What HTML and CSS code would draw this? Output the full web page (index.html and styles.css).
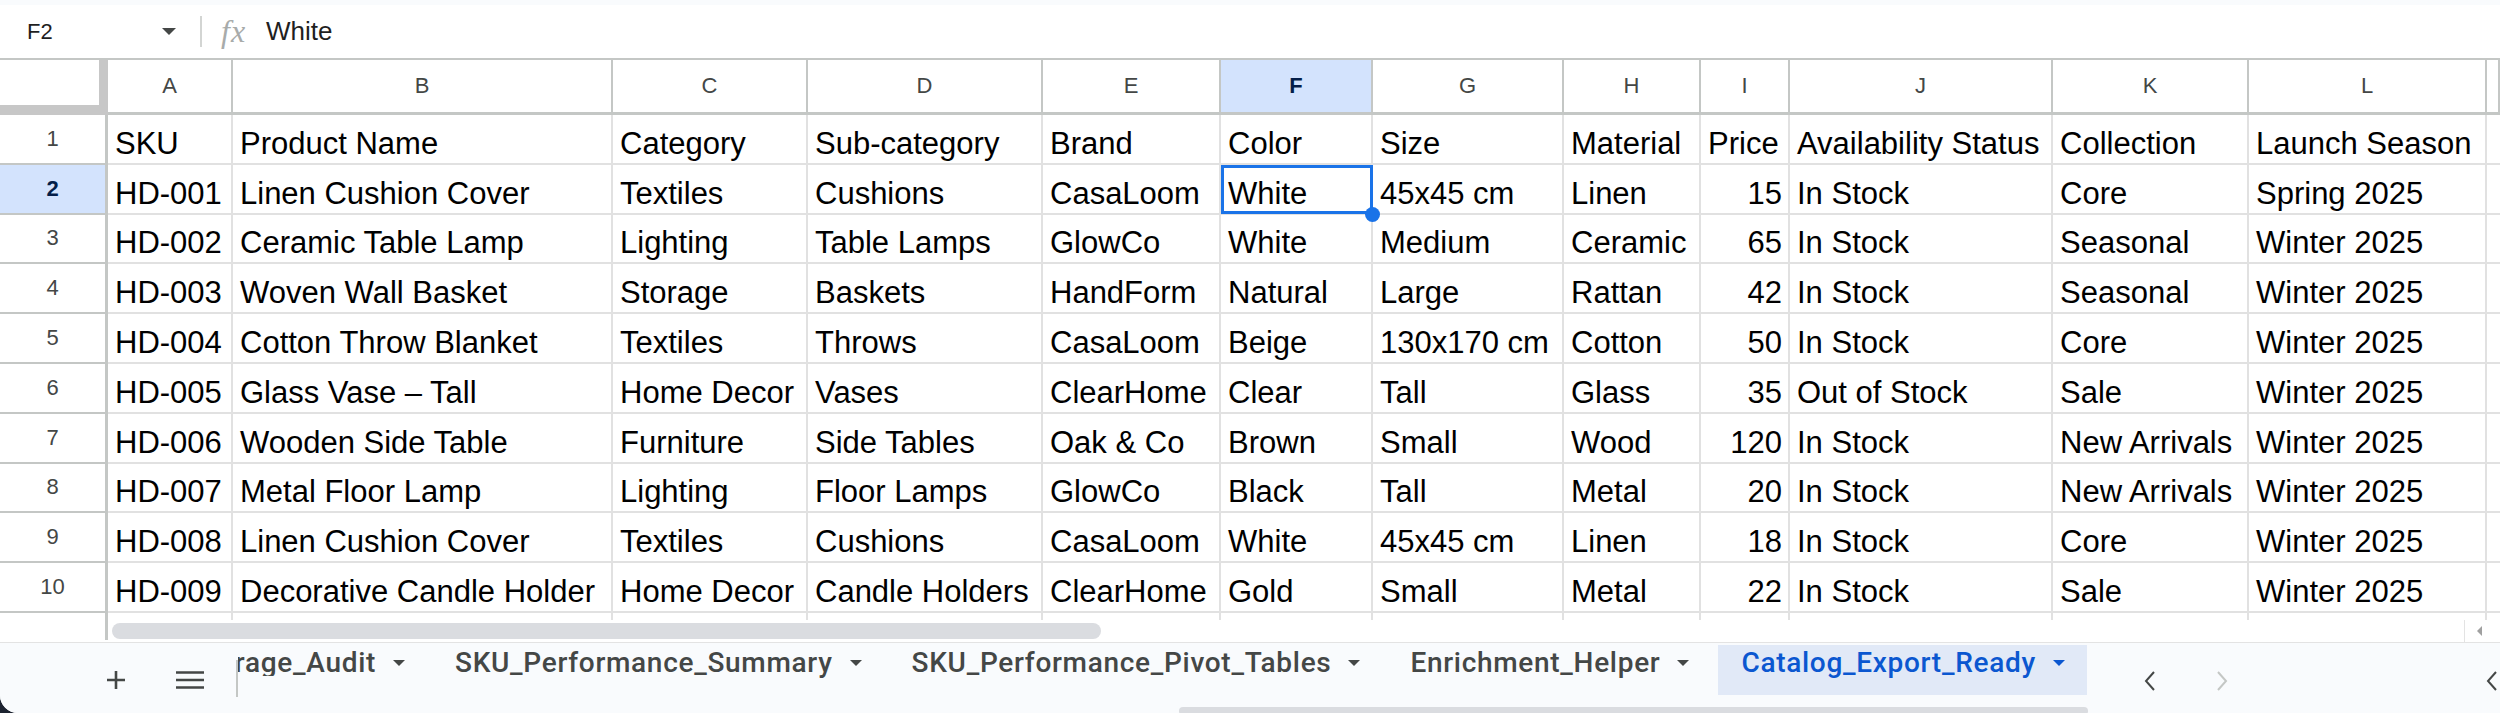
FILE: index.html
```html
<!DOCTYPE html>
<html lang="en">
<head>
	<meta charset="UTF-8">
	<title>Catalog_Export_Ready</title>
	<link rel="stylesheet" href="styles.css">
</head>
<body>
<div class="app">
	<div class="formula-bar">
		<div class="name-box"><span class="cell-ref">F2</span><span class="caret"></span></div>
		<div class="fb-divider"></div>
		<span class="fx">fx</span>
		<span class="formula">White</span>
	</div>

	<div class="sheet">
		<div class="row head">
			<div class="corner"></div>
			<div class="col">A</div><div class="col">B</div><div class="col">C</div><div class="col">D</div>
			<div class="col">E</div><div class="col sel">F</div><div class="col">G</div><div class="col">H</div>
			<div class="col">I</div><div class="col">J</div><div class="col">K</div><div class="col">L</div>
			<div class="col"></div>
		</div>
		<div class="row">
			<div class="rh">1</div>
			<div class="cell">SKU</div><div class="cell">Product Name</div><div class="cell">Category</div><div class="cell">Sub-category</div>
			<div class="cell">Brand</div><div class="cell">Color</div><div class="cell">Size</div><div class="cell">Material</div>
			<div class="cell">Price</div><div class="cell">Availability Status</div><div class="cell">Collection</div><div class="cell">Launch Season</div>
			<div class="cell"></div>
		</div>
		<div class="row">
			<div class="rh sel">2</div>
			<div class="cell">HD-001</div><div class="cell">Linen Cushion Cover</div><div class="cell">Textiles</div><div class="cell">Cushions</div>
			<div class="cell">CasaLoom</div><div class="cell current">White</div><div class="cell">45x45 cm</div><div class="cell">Linen</div>
			<div class="cell num">15</div><div class="cell">In Stock</div><div class="cell">Core</div><div class="cell">Spring 2025</div>
			<div class="cell"></div>
		</div>
		<div class="row">
			<div class="rh">3</div>
			<div class="cell">HD-002</div><div class="cell">Ceramic Table Lamp</div><div class="cell">Lighting</div><div class="cell">Table Lamps</div>
			<div class="cell">GlowCo</div><div class="cell">White</div><div class="cell">Medium</div><div class="cell">Ceramic</div>
			<div class="cell num">65</div><div class="cell">In Stock</div><div class="cell">Seasonal</div><div class="cell">Winter 2025</div>
			<div class="cell"></div>
		</div>
		<div class="row">
			<div class="rh">4</div>
			<div class="cell">HD-003</div><div class="cell">Woven Wall Basket</div><div class="cell">Storage</div><div class="cell">Baskets</div>
			<div class="cell">HandForm</div><div class="cell">Natural</div><div class="cell">Large</div><div class="cell">Rattan</div>
			<div class="cell num">42</div><div class="cell">In Stock</div><div class="cell">Seasonal</div><div class="cell">Winter 2025</div>
			<div class="cell"></div>
		</div>
		<div class="row">
			<div class="rh">5</div>
			<div class="cell">HD-004</div><div class="cell">Cotton Throw Blanket</div><div class="cell">Textiles</div><div class="cell">Throws</div>
			<div class="cell">CasaLoom</div><div class="cell">Beige</div><div class="cell">130x170 cm</div><div class="cell">Cotton</div>
			<div class="cell num">50</div><div class="cell">In Stock</div><div class="cell">Core</div><div class="cell">Winter 2025</div>
			<div class="cell"></div>
		</div>
		<div class="row">
			<div class="rh">6</div>
			<div class="cell">HD-005</div><div class="cell">Glass Vase – Tall</div><div class="cell">Home Decor</div><div class="cell">Vases</div>
			<div class="cell">ClearHome</div><div class="cell">Clear</div><div class="cell">Tall</div><div class="cell">Glass</div>
			<div class="cell num">35</div><div class="cell">Out of Stock</div><div class="cell">Sale</div><div class="cell">Winter 2025</div>
			<div class="cell"></div>
		</div>
		<div class="row">
			<div class="rh">7</div>
			<div class="cell">HD-006</div><div class="cell">Wooden Side Table</div><div class="cell">Furniture</div><div class="cell">Side Tables</div>
			<div class="cell">Oak &amp; Co</div><div class="cell">Brown</div><div class="cell">Small</div><div class="cell">Wood</div>
			<div class="cell num">120</div><div class="cell">In Stock</div><div class="cell">New Arrivals</div><div class="cell">Winter 2025</div>
			<div class="cell"></div>
		</div>
		<div class="row">
			<div class="rh">8</div>
			<div class="cell">HD-007</div><div class="cell">Metal Floor Lamp</div><div class="cell">Lighting</div><div class="cell">Floor Lamps</div>
			<div class="cell">GlowCo</div><div class="cell">Black</div><div class="cell">Tall</div><div class="cell">Metal</div>
			<div class="cell num">20</div><div class="cell">In Stock</div><div class="cell">New Arrivals</div><div class="cell">Winter 2025</div>
			<div class="cell"></div>
		</div>
		<div class="row">
			<div class="rh">9</div>
			<div class="cell">HD-008</div><div class="cell">Linen Cushion Cover</div><div class="cell">Textiles</div><div class="cell">Cushions</div>
			<div class="cell">CasaLoom</div><div class="cell">White</div><div class="cell">45x45 cm</div><div class="cell">Linen</div>
			<div class="cell num">18</div><div class="cell">In Stock</div><div class="cell">Core</div><div class="cell">Winter 2025</div>
			<div class="cell"></div>
		</div>
		<div class="row">
			<div class="rh">10</div>
			<div class="cell">HD-009</div><div class="cell">Decorative Candle Holder</div><div class="cell">Home Decor</div><div class="cell">Candle Holders</div>
			<div class="cell">ClearHome</div><div class="cell">Gold</div><div class="cell">Small</div><div class="cell">Metal</div>
			<div class="cell num">22</div><div class="cell">In Stock</div><div class="cell">Sale</div><div class="cell">Winter 2025</div>
			<div class="cell"></div>
		</div>
		<div class="row stub">
			<div class="rh"></div>
			<div class="cell"></div><div class="cell"></div><div class="cell"></div><div class="cell"></div>
			<div class="cell"></div><div class="cell"></div><div class="cell"></div><div class="cell"></div>
			<div class="cell"></div><div class="cell"></div><div class="cell"></div><div class="cell"></div>
			<div class="cell"></div>
		</div>
	</div>

	<div class="hscroll">
		<div class="hscroll-gutter"></div>
		<div class="hscroll-track"><div class="hscroll-thumb"></div></div>
		<div class="hscroll-end"><span class="mini-tri"></span></div>
	</div>

	<div class="tabbar">
		<div class="tb-btn add">
			<svg width="20" height="20" viewBox="0 0 20 20"><path d="M10 1v18M1 10h18" stroke="#444746" stroke-width="2.6"/></svg>
		</div>
		<div class="tb-btn menu">
			<svg width="28" height="18" viewBox="0 0 28 18"><path d="M0 1.5h28M0 9h28M0 16.5h28" stroke="#444746" stroke-width="2.6"/></svg>
		</div>
		<div class="tb-divider"></div>
		<div class="tabs">
			<div class="tab first"><span class="tab-name"><span>Attribute_Coverage_Audit</span></span><i class="tri"></i></div>
			<div class="tab"><span class="tab-name">SKU_Performance_Summary</span><i class="tri"></i></div>
			<div class="tab"><span class="tab-name">SKU_Performance_Pivot_Tables</span><i class="tri"></i></div>
			<div class="tab"><span class="tab-name">Enrichment_Helper</span><i class="tri"></i></div>
			<div class="tab active"><span class="tab-name">Catalog_Export_Ready</span><i class="tri"></i></div>
		</div>
		<div class="nav prev">
			<svg width="12" height="20" viewBox="0 0 12 20"><path d="M10 1 2 10l8 9" fill="none" stroke="#444746" stroke-width="2"/></svg>
		</div>
		<div class="nav next">
			<svg width="12" height="20" viewBox="0 0 12 20"><path d="M2 1l8 9-8 9" fill="none" stroke="#c4c7c5" stroke-width="2"/></svg>
		</div>
		<div class="side-toggle">
			<svg width="12" height="20" viewBox="0 0 12 20"><path d="M10 1 2 10l8 9" fill="none" stroke="#444746" stroke-width="2"/></svg>
		</div>
		<div class="tab-scroll-thumb"></div>
	</div>
</div>
</body>
</html>
```

FILE: styles.css
```css
* {
	box-sizing: border-box;
}
html, body {
	margin: 0;
}
body {
	background: #1d2330;
	width: 2500px;
	height: 713px;
	overflow: hidden;
	font-family: "Liberation Sans", Arial, sans-serif;
}
.app {
	width: 2500px;
	height: 713px;
	background: #fff;
	border-bottom-left-radius: 18px;
	overflow: hidden;
	display: flex;
	flex-direction: column;
}

/* formula bar */
.formula-bar {
	height: 58px;
	flex: none;
	border-top: 5px solid #f9fbfd;
	display: flex;
	align-items: center;
}
.name-box {
	width: 200px;
	display: flex;
	align-items: center;
	padding: 0 24px 0 27px;
}
.cell-ref {
	font-size: 22px;
	color: #1f1f1f;
}
.caret {
	margin-left: auto;
	border-left: 7px solid transparent;
	border-right: 7px solid transparent;
	border-top: 7px solid #444746;
}
.fb-divider {
	width: 2px;
	height: 31px;
	background: #d3d5d3;
}
.fx {
	width: 28px;
	margin-left: 19px;
	font: italic 32px "Liberation Serif", serif;
	color: #a8abaa;
	letter-spacing: 1px;
}
.formula {
	margin-left: 17px;
	font-size: 26px;
	color: #1f1f1f;
}

/* grid */
.sheet {
	flex: none;
}
.row {
	display: grid;
	grid-template-columns: 108px 125px 380px 195px 235px 178px 152px 191px 137px 89px 263px 196px 238px 1fr;
	height: 49.8px;
}
.row.head {
	height: 57px;
	border-top: 2px solid #c4c7c5;
}
.row.stub {
	height: 7px;
}
.corner {
	background: #fff;
	border-right: 9px solid #c7c7c7;
	border-bottom: 10px solid #c7c7c7;
}
.col {
	border-right: 2px solid #c4c7c5;
	border-bottom: 3px solid #c4c7c5;
	display: flex;
	align-items: center;
	justify-content: center;
	font-size: 22px;
	color: #444746;
}
.rh {
	border-right: 3px solid #c4c7c5;
	border-bottom: 2px solid #c4c7c5;
	display: flex;
	align-items: center;
	justify-content: center;
	font-size: 22px;
	color: #444746;
}
.col.sel, .rh.sel {
	background: #d3e3fd;
	color: #041e49;
	font-weight: bold;
}
.cell {
	border-right: 2px solid #e1e1e1;
	border-bottom: 2px solid #e1e1e1;
	padding: 0 6px 4px 7px;
	display: flex;
	align-items: flex-end;
	font-size: 31px;
	line-height: 31px;
	color: #000;
	white-space: nowrap;
	overflow: hidden;
}
.cell.num {
	justify-content: flex-end;
}
.stub .cell, .stub .rh {
	border-bottom: none;
}
.cell.current {
	position: relative;
	overflow: visible;
}
.cell.current:before {
	content: "";
	position: absolute;
	left: 0;
	top: 0;
	right: -2px;
	bottom: -1px;
	border: 3px solid #1a73e8;
	z-index: 2;
}
.cell.current:after {
	content: "";
	position: absolute;
	right: -9px;
	bottom: -9px;
	width: 15px;
	height: 15px;
	border-radius: 50%;
	background: #1a73e8;
	z-index: 3;
}

/* horizontal scrollbar */
.hscroll {
	height: 23px;
	flex: none;
	display: flex;
	border-bottom: 1px solid #e3e3e3;
}
.hscroll-gutter {
	width: 108px;
	border-right: 3px solid #c4c7c5;
	margin-bottom: 2px;
}
.hscroll-track {
	flex: 1;
	padding: 3px 0 0 4px;
}
.hscroll-thumb {
	width: 989px;
	height: 16px;
	border-radius: 8px;
	background: #dadce0;
}
.hscroll-end {
	width: 36px;
	border-left: 1px solid #e3e3e3;
	display: flex;
	align-items: center;
	padding-left: 12px;
}
.mini-tri {
	border-top: 5px solid transparent;
	border-bottom: 5px solid transparent;
	border-right: 5px solid #a0a0a0;
}

/* sheet tabs */
.tabbar {
	height: 70px;
	flex: none;
	background: #f9fbfd;
	display: flex;
	align-items: flex-start;
	position: relative;
	padding-left: 88px;
}
.tb-btn {
	width: 56px;
	height: 50px;
	margin-top: 12px;
	display: flex;
	align-items: center;
	justify-content: center;
}
.tb-btn.menu {
	margin-left: 18px;
}
.tb-divider {
	width: 2px;
	height: 37px;
	margin: 17px 0 0 18px;
	background: #c4c7c5;
}
.tabs {
	width: 1872px;
	overflow: hidden;
	display: flex;
	margin-top: 2px;
}
.tab {
	flex: none;
	height: 50px;
	padding: 4px 25px 0;
	display: flex;
	align-items: flex-start;
	font: 500 28px Roboto, "Noto Sans", sans-serif;
	line-height: 27px;
	letter-spacing: 0.7px;
	color: #444746;
	white-space: nowrap;
}
.tab.first {
	padding-left: 0;
}
.tab.first .tab-name {
	width: 138px;
	display: flex;
	justify-content: flex-end;
	overflow: hidden;
}
.tab-name span {
	flex: none;
}
.tri {
	margin: 11px 0 0 17px;
	border-left: 6px solid transparent;
	border-right: 6px solid transparent;
	border-top: 6px solid #444746;
}
.tab.active {
	background: #e1e9f7;
	color: #0b57d0;
	margin-left: 4px;
	padding-left: 23px;
	padding-right: 22px;
}
.tab.active .tri {
	border-top-color: #0b57d0;
}
.nav {
	width: 56px;
	height: 50px;
	margin-top: 13px;
	display: flex;
	align-items: center;
	justify-content: center;
}
.nav.prev {
	margin-left: 12px;
}
.nav.next {
	margin-left: 16px;
}
.side-toggle {
	margin: 13px 0 0 auto;
	width: 14px;
	height: 50px;
	display: flex;
	align-items: center;
	overflow: hidden;
}
.tab-scroll-thumb {
	position: absolute;
	left: 1179px;
	bottom: -2px;
	width: 909px;
	height: 8px;
	border-radius: 4px;
	background: #dadce0;
}
```
